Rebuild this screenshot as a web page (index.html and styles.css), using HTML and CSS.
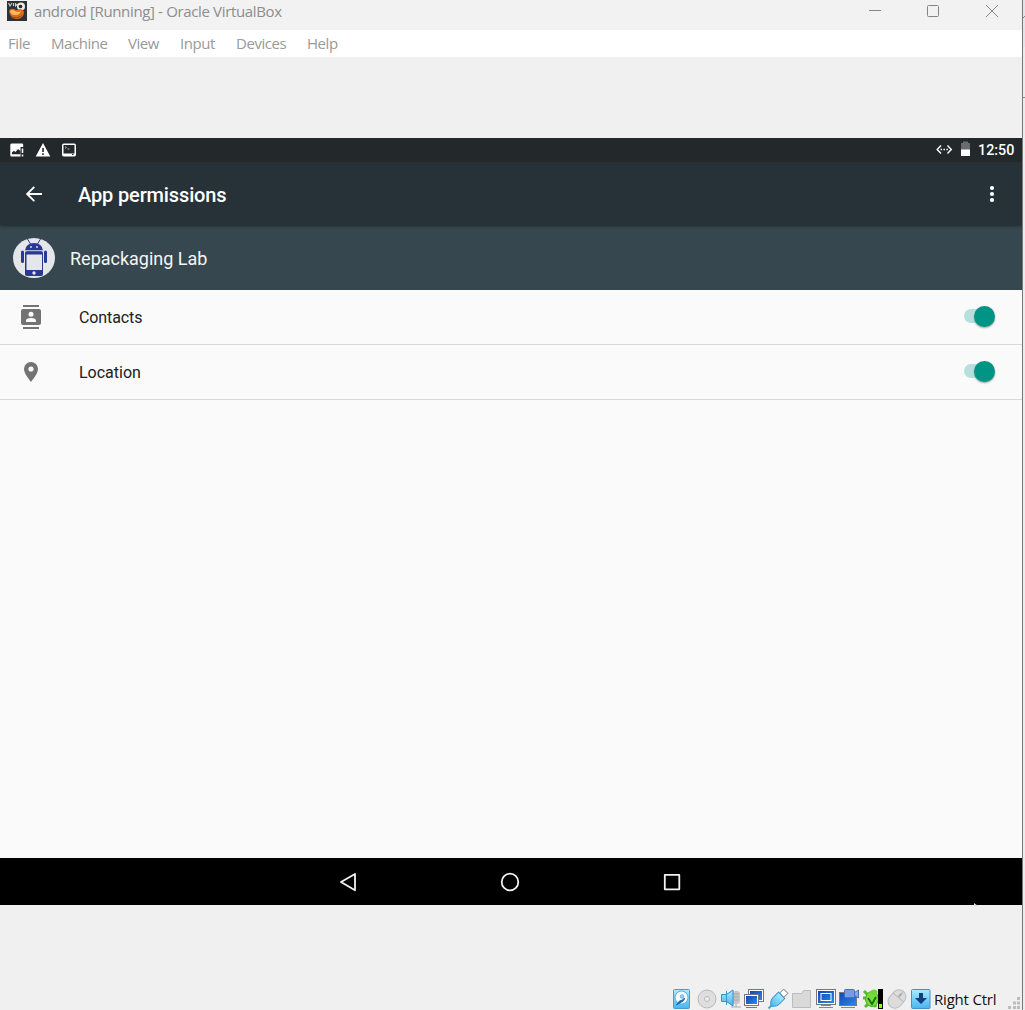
FILE: index.html
```html
<!DOCTYPE html>
<html lang="en">
<head>
<meta charset="utf-8">
<title>android [Running] - Oracle VirtualBox</title>
<link rel="stylesheet" href="styles.css">
</head>
<body>
<div class="desktop">
<main class="window">
  <header class="titlebar">
    <svg class="logo" width="20" height="20" viewBox="0 0 20 20"><rect width="20" height="20" fill="#2d3236"/><path d="M1.500 2l1.500 3 2-3M6.500 2v3M8.500 2v3l2-2" stroke="#cbd0d4" stroke-width="1.100" fill="none"/><circle cx="14" cy="5.500" r="4" fill="#ece9e2"/><circle cx="13.500" cy="5.500" r="1.800" fill="#20252a"/><path d="M2 10q1-3 5-2 3 2 5 0 5 0 5 4-1 6-8 6-6-1-7-8z" fill="#d96d17"/><path d="M3 10q2-2 5 0t6 0q-1 4-6 4-4 0-5-4z" fill="#ffb968"/><path d="M4 15.500q6 3 11-1" stroke="#a24712" fill="none"/></svg>
    <h1>android [Running] - Oracle VirtualBox</h1>
    <svg class="controls" width="132" height="14" viewBox="0 0 132 14" fill="none" stroke="#858585"><path d="M1 6.500h12"/><rect x="59.500" y="1.500" width="11" height="11" rx="1"/><path d="M118 1l12 12M130 1l-12 12"/></svg>
  </header>
  <nav class="menubar"><span>File</span><span>Machine</span><span>View</span><span>Input</span><span>Devices</span><span>Help</span></nav>
  <section class="android">
    <div class="sysbar">
      <svg width="78" height="24" viewBox="0 0 78 24"><path fill="#fff" d="M12 5.500h10q1.200 0 1.200 1.200V9h-2.700v9.500h-9q-1.200 0-1.200-1.200V6.700q0-1.200 1.700-1.200z"/><path d="M12 16.200v-2l2-1.500 1.500 1.300 2.500-3 2.500 2v3.200z" fill="#23282b"/><path d="M22.500 10.500v4.500m0 1.500v2" stroke="#fff" stroke-width="1.500"/><path fill="#fff" fill-rule="evenodd" d="M43 5l7.300 13.500H35.700zM42.200 10v4h1.600v-4zm0 5.300v1.700h1.600v-1.700z"/><rect x="62.750" y="6.250" width="12.500" height="11.500" rx="1" fill="#23282b" stroke="#fff" stroke-width="1.500"/><path d="M63 16.500h12" stroke="#fff" stroke-width="2"/><path d="M65 8.500l1.500 1-1.500 1M67.500 11h2" stroke="#aaa" fill="none"/><path d="M72 16.500h1.500" stroke="#23282b"/></svg>
      <svg class="sys-right" width="38" height="24" viewBox="0 0 38 24"><path d="M5 7.500L1.200 11.500 5 15.500M11.500 7.500l3.800 4-3.800 4" fill="none" stroke="#fff" stroke-width="1.400"/><path d="M4.600 10.800h1.500v1.500H4.600zm2.900 0H9v1.500H7.500zm2.900 0h1.500v1.500h-1.500z" fill="#fff"/><path d="M25 5h2V3.500h5V5h2v7h-9z" fill="#686c6e"/><path d="M25 11.500h9v6.500h-9z" fill="#fff"/></svg>
      <time>12:50</time>
    </div>
    <div class="appbar">
      <svg class="back" width="20" height="20" viewBox="0 0 20 20" fill="none" stroke="#fff" stroke-width="1.800"><path d="M18 10H3M10.300 2.800L3.100 10l7.200 7.200"/></svg>
      <h2>App permissions</h2>
      <svg class="more" width="6" height="18" viewBox="0 0 6 18" fill="#fff"><circle cx="3" cy="3" r="2.100"/><circle cx="3" cy="9" r="2.100"/><circle cx="3" cy="15" r="2.100"/></svg>
    </div>
    <div class="apphead">
      <svg width="42" height="40" viewBox="0 0 42 40"><ellipse cx="21" cy="20" rx="21" ry="20" fill="#e4e6ea"/><g fill="#293795"><path d="M12 12.500Q13 5 21 5t9 7.500z"/><path d="M14.500 1l3 5M27.500 1l-3 5" stroke="#293795"/><rect x="12" y="13" width="18" height="25" rx="2"/><rect x="8" y="12.500" width="3" height="12.500" rx="1.500"/><rect x="31" y="12.500" width="3" height="12.500" rx="1.500"/></g><path d="M12 12.800h18" stroke="#e4e6ea" stroke-width=".6"/><path d="M13.500 16.500h15.500v15.500H13.500z" fill="#e4e6ea"/><circle cx="18" cy="9" r=".9" fill="#e4e6ea"/><circle cx="24" cy="9" r=".9" fill="#e4e6ea"/><circle cx="21" cy="35" r="1.700" fill="#e4e6ea"/></svg>
      <span>Repackaging Lab</span>
    </div>
    <div class="row">
      <svg width="24" height="26" viewBox="0 0 24 26"><path d="M4 2h16M4 24h16" stroke="#737373" stroke-width="2"/><rect x="2" y="5" width="20" height="16" rx="2" fill="#737373"/><circle cx="12" cy="10.300" r="2.500" fill="#fafafa"/><path d="M7 18v-1.300q0-2.700 5-2.700t5 2.700V18z" fill="#fafafa"/></svg>
      <span class="contacts">Contacts</span><i class="switch"></i>
    </div>
    <div class="row">
      <svg width="24" height="26" viewBox="0 0 24 26"><path fill="#737373" fill-rule="evenodd" d="M12 3a7 7 0 0 0-7 7c0 5.200 7 12.800 7 12.800s7-7.600 7-12.800a7 7 0 0 0-7-7zm0 4.400a2.600 2.600 0 1 1 0 5.200 2.600 2.600 0 0 1 0-5.200z"/></svg>
      <span>Location</span><i class="switch"></i>
    </div>
    <div class="blank"></div>
    <div class="softkeys"><svg width="344" height="24" viewBox="0 0 344 24" fill="none" stroke="#f2f2f2" stroke-width="1.800" stroke-linejoin="round"><path d="M16 4L2 12 16 20.200z"/><circle cx="171" cy="12" r="8.300"/><rect x="325.800" y="4.800" width="14.500" height="14.500"/></svg></div>
  </section>
  <footer class="status">
    <svg width="259" height="20" viewBox="0 0 259 20">
      <defs><linearGradient id="sky" x2="0" y2="1"><stop stop-color="#a7ecff"/><stop offset="1" stop-color="#48b5ef"/></linearGradient><linearGradient id="deep" x2="1" y2="1"><stop stop-color="#1148b0"/><stop offset="1" stop-color="#2c88ed"/></linearGradient></defs>
      <g><rect x="1.500" y=".5" width="16" height="19" rx="1" fill="url(#sky)" stroke="#4b9bd0"/><circle cx="9.500" cy="8.500" r="6.500" fill="#f5fcff" stroke="#5baee0"/><circle cx="10" cy="7.500" r="1.700" fill="#9ed8f3" stroke="#6aaed8"/><path d="M12.500 9q0 3-3 4l-5 3 3-4 3-1z" fill="#2866ba" stroke="#2866ba"/></g>
      <g fill="#dedede" stroke="#b9b9b9"><circle cx="35" cy="10" r="9"/><circle cx="35" cy="10" r="2.500" fill="#eee"/></g>
      <g><rect x="60" y="2" width="8" height="13" rx="3" fill="#c5c5c5"/><path d="M61 5h6M61 8h6M61 11h6M59 18h10M64 15v3" stroke="#aaa"/><path d="M49.500 5.500h5L61 1v16l-6.500-4.500h-5z" fill="url(#sky)" stroke="#3192c9"/><path d="M54.500 2v14" stroke="#3898cc"/></g>
      <g stroke="#777"><rect x="76.500" y=".5" width="15" height="12" fill="#fff"/><path d="M78 2h12v9H78z" fill="url(#deep)" stroke="none"/><rect x="72.500" y="5.500" width="14" height="11" fill="#fff"/><path d="M74 7h11v8H74z" fill="url(#deep)" stroke="none"/><path d="M74 18.500h11"/></g>
      <g transform="translate(105 11) rotate(45)"><rect x="-3" y="-12.500" width="6" height="6" fill="#fff" stroke="#999"/><path d="M-4.500-6.500h9v8q0 4-4.500 7-4.500-3-4.500-7z" fill="url(#sky)" stroke="#3996ce"/><path d="M0 8v4" stroke="#40a3d8" stroke-width="2"/></g>
      <path d="M120.500 18.500v-14h9l2-3h7v17z" fill="#d9d9d9" stroke="#bcbcbc"/>
      <g><rect x="144.500" y=".5" width="19" height="15" fill="#fff" stroke="#777"/><rect x="146" y="2" width="16" height="12" fill="url(#deep)"/><rect x="149" y="4.500" width="10" height="7" fill="none" stroke="#fff"/><path d="M147 18.500h14M149 16.500h10" stroke="#888"/></g>
      <g><rect x="167.500" y="3.500" width="17" height="13" fill="url(#deep)" stroke="#777"/><path d="M169 18.500h14" stroke="#888"/><rect x="172.500" y=".5" width="10" height="8" rx="1" fill="#779be5" stroke="#4b6dbd"/><path d="M182.500 3.500l4-2.500v8l-4-2.500z" fill="#88a8ee" stroke="#4b6dbd"/></g>
      <g><path d="M192 2l4 4M191 9h5M193 18l4-4M204 18l-2-3" stroke="#57bd2c" stroke-width="3"/><ellipse cx="200" cy="10" rx="6.500" ry="7.500" fill="#78dc3c" stroke="#45ad27"/><ellipse cx="202" cy="3" rx="3.500" ry="2.500" fill="#70d83b"/><path d="M196 9l4 6 4-7" stroke="#176d12" stroke-width="1.800" fill="none"/><path d="M206 0h5v20h-5z" fill="#000"/><path d="M207 15h3v4h-3z" fill="#8cff00"/></g>
      <g transform="translate(225 10) rotate(40)"><rect x="-7" y="-10" width="14" height="20" rx="7" fill="#dcdcdc" stroke="#bbb"/><path d="M-7-2H7M0-10v8" stroke="#bbb"/><rect x="-1" y="-7" width="2" height="4" fill="#aaa"/></g>
      <g><rect x="239.500" y=".5" width="18.500" height="19" rx="1" fill="url(#sky)" stroke="#4492c8"/><path d="M247 4h4v5h4l-6 6-6-6h4z" fill="#113d82"/></g>
    </svg>
    <span class="host">Right Ctrl</span>
    <svg class="grip" width="12" height="12" viewBox="0 0 12 12" fill="#bdbdbd"><path d="M9 0h3v3H9zM5 4.500h3v3H5zM9 4.500h3v3H9zM0 9h3v3H0zM5 9h3v3H5zM9 9h3v3H9z"/></svg>
  </footer>
  <svg class="pointer" width="5" height="3" viewBox="0 0 5 3"><path d="M1 0v3h4z" fill="#ddd"/></svg>
</main>
<svg class="behind" width="2" height="1010" viewBox="0 0 2 1010"><path d="M0 0h2v47H0z" fill="#e3e3e8"/><path d="M0 18l2-2M0 97.500h2" stroke="#888"/></svg>
</div>
</body>
</html>
```
FILE: styles.css
```css
* { box-sizing: border-box; }
body { margin: 0; background: #eee; font-family: "Open Sans", sans-serif; overflow: hidden; }
svg { display: block; flex-shrink: 0; }
h1, h2 { margin: 0; font-weight: 400; }
span, h1, h2, time { white-space: nowrap; }
.desktop { display: flex; width: 1025px; height: 1010px; }
.window { position: relative; display: flex; flex-direction: column; width: 1023px; border-right: 1px solid #777; background: #f0f0f0; }
.behind { background: #ececec; }
.titlebar { display: flex; height: 30px; padding-left: 7px; background: #f2f2f2; }
.logo { margin-top: 1px; }
.titlebar h1 { margin-left: 7px; font-size: 15px; line-height: 23px; color: #8d8d8d; letter-spacing: -.35px; }
.controls { margin: 4px 22px 0 auto; }
.menubar { display: grid; grid-template-columns: 43px 77px 52px 56px 71px 60px; height: 27px; padding-left: 8px; background: #fff; color: #999; font-size: 15px; line-height: 27px; letter-spacing: -.45px; }
.android { display: flex; flex-direction: column; height: 767px; margin-top: 81px; background: #fafafa; font-family: Roboto, sans-serif; }
.sysbar { display: flex; height: 24px; background: #23282b; }
.sys-right { margin-left: auto; }
.sysbar time { width: 48px; padding-left: 4px; color: #fff; font-size: 14.3px; font-weight: 500; line-height: 25px; }
.appbar { display: flex; align-items: center; height: 63px; padding: 0 27px 0 24px; background: #273238; box-shadow: 0 1px 3px #1e292e; z-index: 1; clip-path: inset(0 0 -5px 0); }
.appbar h2 { margin-left: 34px; padding-top: 2px; color: #fff; font-size: 20px; font-weight: 500; letter-spacing: -.14px; }
.more { margin-left: auto; }
.apphead { display: flex; align-items: center; height: 65px; padding-left: 13px; background: #37474f; color: #f5f5f5; font-size: 18px; }
.apphead span { margin-left: 15px; padding-top: 2px; }
.row { display: flex; align-items: center; height: 55px; padding: 0 27px 0 19px; border-bottom: 1px solid #d9d9d9; color: #212121; font-size: 16px; }
.row span { margin-left: 36px; padding-top: 1px; }
.row .contacts { letter-spacing: -.1px; }
.switch { position: relative; width: 31px; height: 22px; margin-left: auto; }
.switch::before { content: ""; position: absolute; left: 0; top: 3px; width: 28px; height: 14px; border-radius: 7px; background: #b6e0dc; }
.switch::after { content: ""; position: absolute; right: 0; top: 0; width: 21px; height: 21px; border-radius: 50%; background: #009485; box-shadow: 0 1px 2px #999; }
.blank { flex: 1; }
.softkeys { height: 47px; padding: 12px 0 0 339px; background: #000; }
.status { display: flex; align-items: center; height: 22px; margin-top: auto; padding-left: 672px; }
.host { margin-left: 3px; color: #111; font-size: 15px; letter-spacing: -.2px; }
.grip { margin: 7px 2px 0 auto; }
.pointer { position: absolute; left: 973px; top: 903px; }
```
